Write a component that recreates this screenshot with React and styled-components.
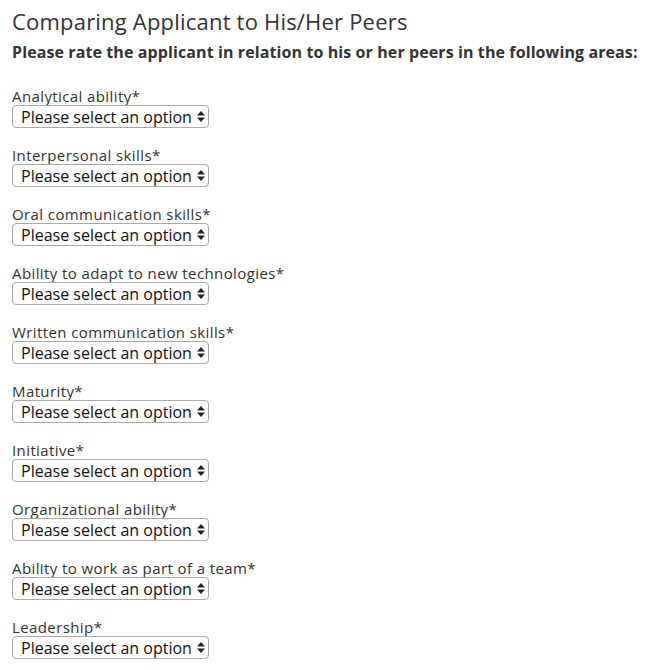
import React from 'react';
import styled, { createGlobalStyle } from 'styled-components';

const GlobalStyle = createGlobalStyle`
  body {
    margin: 0;
    background: #fff;
    font-family: "Open Sans", "Liberation Sans", sans-serif;
    color: #333;
  }
`;

const Page = styled.div`
  padding: 8px 12px 0 12px;
`;

const Title = styled.h2`
  margin: 0;
  font-size: 22px;
  line-height: 26px;
  font-weight: 400;
  letter-spacing: 0.2px;
  color: #333;
`;

const Intro = styled.p`
  margin: 8px 0 0 0;
  font-size: 16px;
  line-height: 20px;
  font-weight: 700;
  letter-spacing: 0.1px;
  white-space: nowrap;
  color: #333;
`;

const FieldList = styled.div`
  display: flex;
  flex-direction: column;
  gap: 18px;
  margin-top: 25px;
`;

const Field = styled.div`
  display: flex;
  flex-direction: column;
  align-items: flex-start;
`;

const Label = styled.label`
  font-size: 15px;
  line-height: 18px;
  letter-spacing: 0.4px;
  color: #333;
`;

const SelectWrap = styled.div`
  position: relative;
  width: 197px;
  height: 23px;
`;

const Select = styled.select`
  appearance: none;
  -webkit-appearance: none;
  width: 100%;
  height: 100%;
  box-sizing: border-box;
  margin: 0;
  padding: 0 0 0 8px;
  border: 1px solid #a9a9a9;
  border-radius: 4px;
  background: #fff;
  font-family: inherit;
  font-size: 16px;
  color: #111;
  outline: none;
`;

const Arrows = styled.svg`
  position: absolute;
  right: 4px;
  top: 6px;
  pointer-events: none;
`;

const fields = [
  'Analytical ability',
  'Interpersonal skills',
  'Oral communication skills',
  'Ability to adapt to new technologies',
  'Written communication skills',
  'Maturity',
  'Initiative',
  'Organizational ability',
  'Ability to work as part of a team',
  'Leadership',
];

const RatingField = ({ label }) => (
  <Field>
    <Label>{label}*</Label>
    <SelectWrap>
      <Select defaultValue="">
        <option value="">Please select an option</option>
      </Select>
      <Arrows width="8" height="11" viewBox="0 0 8 11">
        <path d="M4 0 L8 4.5 L0 4.5 Z" fill="#222" />
        <path d="M0 6.5 L8 6.5 L4 11 Z" fill="#222" />
      </Arrows>
    </SelectWrap>
  </Field>
);

export default function App() {
  return (
    <Page>
      <GlobalStyle />
      <Title>Comparing Applicant to His/Her Peers</Title>
      <Intro>Please rate the applicant in relation to his or her peers in the following areas:</Intro>
      <FieldList>
        {fields.map((f) => (
          <RatingField key={f} label={f} />
        ))}
      </FieldList>
    </Page>
  );
}
